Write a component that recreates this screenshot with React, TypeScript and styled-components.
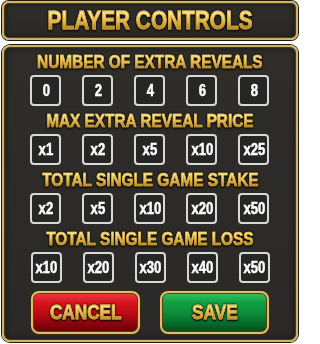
import React from "react";
import styled, { createGlobalStyle } from "styled-components";

const Global = createGlobalStyle`
  html, body { margin: 0; padding: 0; background: #ffffff; }
  body { font-family: "Liberation Sans", Arial, sans-serif; }
  * { box-sizing: border-box; }
`;

const Root = styled.div`
  width: 300px;
  height: 344px;
  padding: 1px 2px 2px 2px;
  display: flex;
  flex-direction: column;
  gap: 5px;
  overflow: hidden;
`;

const Frame = styled.div`
  border: 2px solid #cfb266;
  border-radius: 7px;
  background: linear-gradient(#2f2d2a, #2a2927);
  box-shadow: 0 0 0 1px #1e1a10, inset 0 0 0 1px #4a3a18, inset 0 0 6px rgba(0, 0, 0, 0.65);
`;

const Header = styled(Frame)`
  height: 39px;
  display: flex;
  align-items: center;
  justify-content: center;
`;

const GoldText = styled.span<{ $size: number; $scale?: number; $stroke?: number }>`
  display: inline-block;
  font-family: "Liberation Sans", Arial, sans-serif;
  font-weight: 700;
  font-size: ${(p) => p.$size}px;
  line-height: 1.15;
  transform: scaleX(${(p) => p.$scale ?? 0.82});
  background: linear-gradient(180deg, #fffbd0 0%, #f8e07c 30%, #e2b444 55%, #a87a1c 82%, #d4ae58 100%);
  -webkit-background-clip: text;
  background-clip: text;
  color: transparent;
  -webkit-text-stroke: ${(p) => p.$stroke ?? 0.6}px rgba(214, 170, 70, 0.9);
  filter: drop-shadow(0 1px 0 #1a1206) drop-shadow(0 0 1px #000);
  white-space: nowrap;
`;

const Panel = styled(Frame)`
  flex: 1;
  border-radius: 8px;
  padding: 6px 0 0 0;
  display: flex;
  flex-direction: column;
  align-items: center;
`;

const Section = styled.div`
  display: flex;
  flex-direction: column;
  align-items: center;
  gap: 4px;
  margin-bottom: 6px;
`;

const Title = styled.div`
  height: 18px;
  display: flex;
  align-items: center;
  justify-content: center;
`;

const Row = styled.div`
  display: flex;
  gap: 21px;
`;

const Box = styled.div`
  width: 31px;
  height: 31px;
  border: 2px solid #d8d8d8;
  border-radius: 4px;
  background: #262625;
  display: flex;
  align-items: center;
  justify-content: center;
`;

const BoxLabel = styled.span`
  display: inline-block;
  color: #ffffff;
  font-weight: 700;
  font-size: 16px;
  line-height: 1;
  transform: scaleX(0.82);
  -webkit-text-stroke: 0.5px #ffffff;
  white-space: nowrap;
`;

const Buttons = styled.div`
  display: flex;
  gap: 20px;
  margin-top: 2px;
`;

const Button = styled.div<{ $variant: "red" | "green" }>`
  width: 109px;
  height: 43px;
  border-radius: 8px;
  border: 2px solid #dcc06e;
  box-shadow: 0 0 0 1px #3a2a10, inset 0 0 0 1px #5a3c10;
  background: ${(p) =>
    p.$variant === "red"
      ? "linear-gradient(180deg, #f03a44 0%, #d8141e 25%, #b80a14 55%, #8a040c 80%, #620207 100%)"
      : "linear-gradient(180deg, #34c060 0%, #12a044 25%, #0b8a38 55%, #06692a 80%, #03481b 100%)"};
  display: flex;
  align-items: center;
  justify-content: center;
`;

const sections: { title: string; values: string[] }[] = [
  { title: "NUMBER OF EXTRA REVEALS", values: ["0", "2", "4", "6", "8"] },
  { title: "MAX EXTRA REVEAL PRICE", values: ["x1", "x2", "x5", "x10", "x25"] },
  { title: "TOTAL SINGLE GAME STAKE", values: ["x2", "x5", "x10", "x20", "x50"] },
  { title: "TOTAL SINGLE GAME LOSS", values: ["x10", "x20", "x30", "x40", "x50"] },
];

export default function App() {
  return (
    <>
      <Global />
      <Root>
        <Header>
          <GoldText $size={26} $scale={0.8} $stroke={0.8}>PLAYER CONTROLS</GoldText>
        </Header>
        <Panel>
          {sections.map((s) => (
            <Section key={s.title}>
              <Title>
                <GoldText $size={18.5} $scale={0.83}>{s.title}</GoldText>
              </Title>
              <Row>
                {s.values.map((v) => (
                  <Box key={v}>
                    <BoxLabel>{v}</BoxLabel>
                  </Box>
                ))}
              </Row>
            </Section>
          ))}
          <Buttons>
            <Button $variant="red">
              <GoldText $size={21} $stroke={0.8}>CANCEL</GoldText>
            </Button>
            <Button $variant="green">
              <GoldText $size={21} $stroke={0.8}>SAVE</GoldText>
            </Button>
          </Buttons>
        </Panel>
      </Root>
    </>
  );
}
